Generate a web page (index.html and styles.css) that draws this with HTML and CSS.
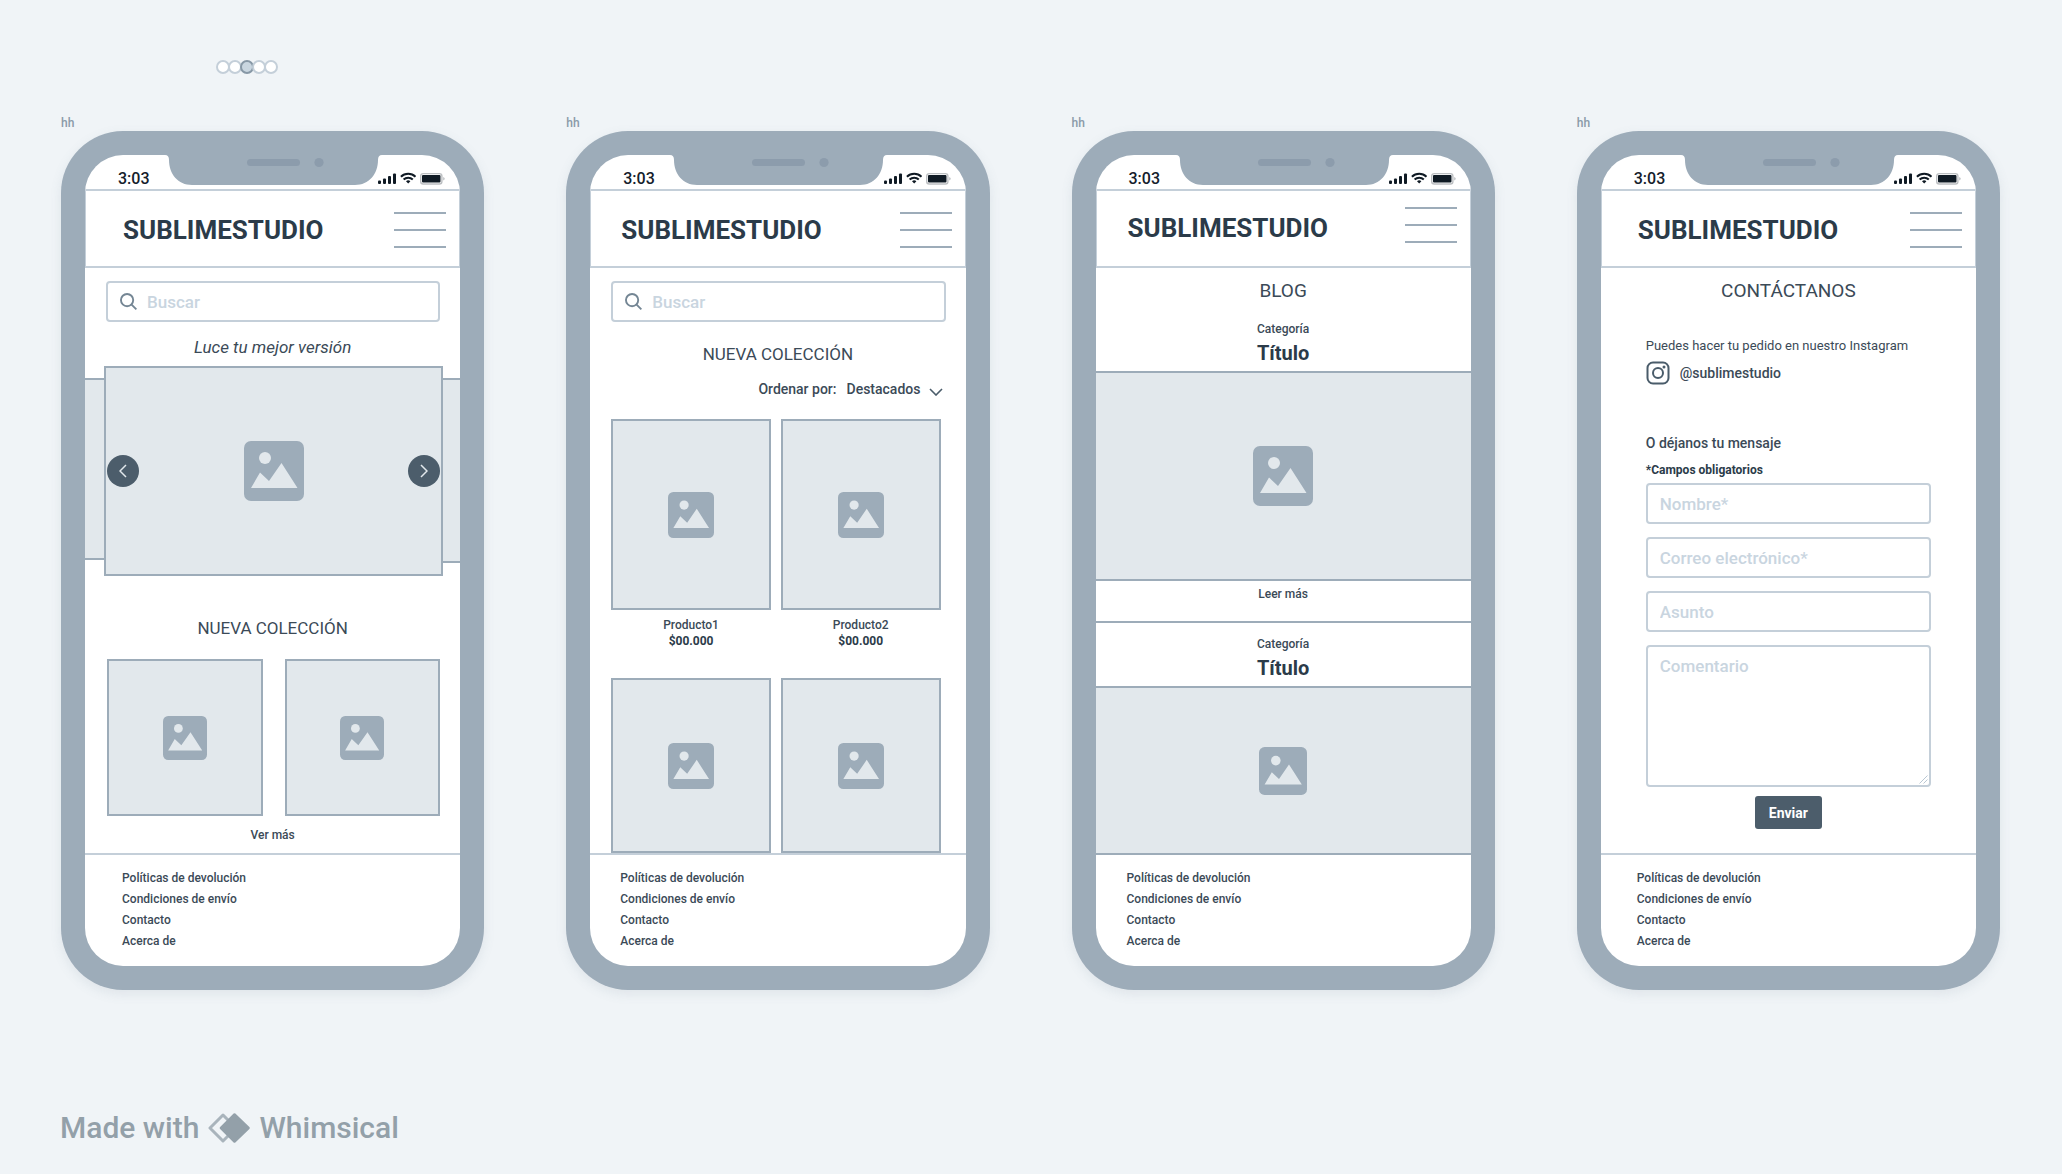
FILE: index.html
```html
<!DOCTYPE html>
<html lang="es">
<head>
<meta charset="utf-8">
<meta name="viewport" content="width=device-width, initial-scale=1">
<title>Sublimestudio – wireframes</title>
<link rel="stylesheet" href="styles.css">
</head>
<body>
<svg class="sprite" aria-hidden="true">
  <symbol id="i-image" viewBox="0 0 60 60">
    <rect width="60" height="60" rx="7" fill="#9dacb9"/>
    <circle cx="21" cy="17" r="6" fill="#e2e8ec"/>
    <path d="M7 47 16 31.500 25 40 37.500 22 53.500 47Z" fill="#e2e8ec"/>
  </symbol>
  <symbol id="i-notch" viewBox="0 0 217 30">
    <path d="M0 0H217Q213 0 213 5C213 19 204 30 190 30H27C13 30 4 19 4 5Q4 0 0 0Z" fill="#9dacb9"/>
    <rect x="82" y="4" width="53" height="7" rx="3.500" fill="#8c9cac"/>
    <circle cx="154" cy="7.500" r="4.600" fill="#8c9cac"/>
  </symbol>
  <symbol id="i-status" viewBox="0 0 68 14">
    <g fill="#0f1a24">
      <rect x="0" y="8.500" width="3" height="3.500" rx="1"/>
      <rect x="5" y="6.500" width="3" height="5.500" rx="1"/>
      <rect x="10" y="4" width="3" height="8" rx="1"/>
      <rect x="15" y="1.500" width="3" height="10.500" rx="1"/>
      <rect x="44" y="3" width="18.500" height="7.500" rx="1"/>
      <path d="M28 9.200a3.200 3.200 0 0 1 4.400 0L30.200 11.600Z"/>
    </g>
    <g fill="none" stroke="#0f1a24" stroke-width="2">
      <path d="M22.900 4.800a10.500 10.500 0 0 1 14.600 0"/>
      <path d="M25.600 7.500a6.600 6.600 0 0 1 9.200 0"/>
    </g>
    <rect x="42.700" y="1.600" width="21.200" height="10.400" rx="2.500" fill="none" stroke="#bcbfc2" stroke-width="1.400"/>
    <path d="M65.200 5v3.600q1.500-.600 1.500-1.800T65.200 5Z" fill="#bcbfc2"/>
  </symbol>
  <symbol id="i-search" viewBox="0 0 18 18">
    <g fill="none" stroke="#748694" stroke-width="2"><circle cx="7.500" cy="7.500" r="6.500"/><path d="M12 12 17.300 17.300"/></g>
  </symbol>
  <symbol id="i-prev" viewBox="0 0 8 14"><path d="M7 1 1 7l6 6" fill="none" stroke="#e2e8ec" stroke-width="1.500"/></symbol>
  <symbol id="i-next" viewBox="0 0 8 14"><path d="M1 1l6 6-6 6" fill="none" stroke="#e2e8ec" stroke-width="1.500"/></symbol>
</svg>

<div class="dots">
  <span class="dot"></span><span class="dot"></span><span class="dot dot-on"></span><span class="dot"></span><span class="dot"></span>
</div>

<main class="board">
  <section class="frame frame-home">
    <p class="frame-name">hh</p>
    <div class="phone"><div class="screen">
      <div class="status"><span class="time">3:03</span><svg class="notch"><use href="#i-notch"/></svg><svg class="signals"><use href="#i-status"/></svg></div>
      <header class="top"><h1 class="brand">SUBLIMESTUDIO</h1><button class="menu" aria-label="Menú"><span></span><span></span><span></span></button></header>
      <div class="content">
        <label class="search"><svg class="search-icon" viewBox="0 0 18 18"><use href="#i-search"/></svg><input type="search" placeholder="Buscar" aria-label="Buscar"></label>
        <p class="tagline">Luce tu mejor versión</p>
        <div class="carousel">
          <div class="peek peek-left"></div>
          <div class="slide">
            <button class="arrow" aria-label="Anterior"><svg><use href="#i-prev"/></svg></button>
            <svg class="pic pic-60"><use href="#i-image"/></svg>
            <button class="arrow" aria-label="Siguiente"><svg><use href="#i-next"/></svg></button>
          </div>
          <div class="peek peek-right"></div>
        </div>
        <h2 class="heading">NUEVA COLECCIÓN</h2>
        <div class="pair">
          <div class="box"><svg class="pic pic-44"><use href="#i-image"/></svg></div>
          <div class="box"><svg class="pic pic-44"><use href="#i-image"/></svg></div>
        </div>
        <a class="more" href="#">Ver más</a>
      </div>
      <footer class="foot"><a href="#">Políticas de devolución</a><a href="#">Condiciones de envío</a><a href="#">Contacto</a><a href="#">Acerca de</a></footer>
    </div></div>
  </section>

  <section class="frame frame-shop">
    <p class="frame-name">hh</p>
    <div class="phone"><div class="screen">
      <div class="status"><span class="time">3:03</span><svg class="notch"><use href="#i-notch"/></svg><svg class="signals"><use href="#i-status"/></svg></div>
      <header class="top"><h1 class="brand">SUBLIMESTUDIO</h1><button class="menu" aria-label="Menú"><span></span><span></span><span></span></button></header>
      <div class="content">
        <label class="search"><svg class="search-icon" viewBox="0 0 18 18"><use href="#i-search"/></svg><input type="search" placeholder="Buscar" aria-label="Buscar"></label>
        <h2 class="heading">NUEVA COLECCIÓN</h2>
        <div class="sort">
          <label for="sort">Ordenar por:</label>
          <span class="sort-field"><select id="sort"><option>Destacados</option></select>
          <svg class="sort-chevron" viewBox="0 0 14 8"><path d="M1 1l6 6 6-6" fill="none" stroke="#4a5c6a" stroke-width="1.600"/></svg></span>
        </div>
        <div class="products">
          <article class="product">
            <div class="box"><svg class="pic pic-46"><use href="#i-image"/></svg></div>
            <p class="name">Producto1</p><p class="price">$00.000</p>
          </article>
          <article class="product">
            <div class="box"><svg class="pic pic-46"><use href="#i-image"/></svg></div>
            <p class="name">Producto2</p><p class="price">$00.000</p>
          </article>
          <article class="product product-cut"><div class="box"><svg class="pic pic-46"><use href="#i-image"/></svg></div></article>
          <article class="product product-cut"><div class="box"><svg class="pic pic-46"><use href="#i-image"/></svg></div></article>
        </div>
      </div>
      <footer class="foot"><a href="#">Políticas de devolución</a><a href="#">Condiciones de envío</a><a href="#">Contacto</a><a href="#">Acerca de</a></footer>
    </div></div>
  </section>

  <section class="frame frame-blog">
    <p class="frame-name">hh</p>
    <div class="phone"><div class="screen">
      <div class="status"><span class="time">3:03</span><svg class="notch"><use href="#i-notch"/></svg><svg class="signals"><use href="#i-status"/></svg></div>
      <header class="top"><h1 class="brand">SUBLIMESTUDIO</h1><button class="menu" aria-label="Menú"><span></span><span></span><span></span></button></header>
      <div class="content">
        <h2 class="page-title">BLOG</h2>
        <article class="post">
          <p class="category">Categoría</p>
          <h3 class="post-title">Título</h3>
          <div class="cover"><svg class="pic pic-60"><use href="#i-image"/></svg></div>
          <a class="read" href="#">Leer más</a>
        </article>
        <article class="post post-next">
          <p class="category">Categoría</p>
          <h3 class="post-title">Título</h3>
          <div class="cover"><svg class="pic pic-48"><use href="#i-image"/></svg></div>
        </article>
      </div>
      <footer class="foot"><a href="#">Políticas de devolución</a><a href="#">Condiciones de envío</a><a href="#">Contacto</a><a href="#">Acerca de</a></footer>
    </div></div>
  </section>

  <section class="frame frame-contact">
    <p class="frame-name">hh</p>
    <div class="phone"><div class="screen">
      <div class="status"><span class="time">3:03</span><svg class="notch"><use href="#i-notch"/></svg><svg class="signals"><use href="#i-status"/></svg></div>
      <header class="top"><h1 class="brand">SUBLIMESTUDIO</h1><button class="menu" aria-label="Menú"><span></span><span></span><span></span></button></header>
      <div class="content">
        <h2 class="page-title">CONTÁCTANOS</h2>
        <form class="contact">
          <p class="intro">Puedes hacer tu pedido en nuestro Instagram</p>
          <a class="insta" href="#"><svg viewBox="0 0 24 24"><g fill="none" stroke="#4a5c6a" stroke-width="2"><rect x="1.500" y="1.500" width="21" height="21" rx="5.500"/><circle cx="12" cy="12" r="5"/></g><circle cx="18" cy="6" r="1.500" fill="#4a5c6a"/></svg><span>@sublimestudio</span></a>
          <p class="lead">O déjanos tu mensaje</p>
          <p class="required">*Campos obligatorios</p>
          <div class="fields">
            <input type="text" placeholder="Nombre*" aria-label="Nombre">
            <input type="email" placeholder="Correo electrónico*" aria-label="Correo electrónico">
            <input type="text" placeholder="Asunto" aria-label="Asunto">
            <div class="area"><textarea placeholder="Comentario" aria-label="Comentario"></textarea><svg class="grip" viewBox="0 0 9 9"><path d="M.500 8.500l8-8M4.500 8.500l4-4" stroke="#b9c7d3" fill="none"/></svg></div>
          </div>
          <button class="send" type="submit">Enviar</button>
        </form>
      </div>
      <footer class="foot"><a href="#">Políticas de devolución</a><a href="#">Condiciones de envío</a><a href="#">Contacto</a><a href="#">Acerca de</a></footer>
    </div></div>
  </section>
</main>

<div class="credit">
  <span>Made with</span>
  <svg viewBox="0 0 42 30"><path d="M15 2 2 15l13 13 13-13Z" fill="none" stroke="#a9b4bc" stroke-width="3" stroke-linejoin="round"/><path d="M26.500 1.500 40.500 15 26.500 28.500 13 15Z" fill="#93a0a9" stroke="#93a0a9" stroke-width="2.500" stroke-linejoin="round"/></svg>
  <span>Whimsical</span>
</div>
</body>
</html>
```
FILE: styles.css
```css
:root {
  --frame: #9dacb9;
  --line: #c4cfd9;
  --fill: #e2e8ec;
  --ink: #2b3b49;
  --text: #3b4a57;
  --solid: #4c5d6b;
  --hint: #c9d5df;
}

* { box-sizing: border-box; margin: 0; }

body {
  background: #f0f4f7;
  color: var(--text);
  font-family: Roboto, "Liberation Sans", sans-serif;
  font-size: 12px;
  font-weight: 500;
  line-height: 20px;
}

a { color: inherit; text-decoration: none; }
button, input, select, textarea { font-family: inherit; color: inherit; }
button { border: 0; padding: 0; background: none; }
.sprite { display: block; width: 0; height: 0; }
.pic { flex: none; }
.pic-44 { width: 44px; height: 44px; }
.pic-46 { width: 46px; height: 46px; }
.pic-48 { width: 48px; height: 48px; }
.pic-60 { width: 60px; height: 60px; }

.dots { display: flex; gap: 12px; padding: 60px 0 0 216px; }
.dot {
  flex: none;
  width: 14px;
  height: 14px;
  margin-right: -14px;
  border: 2px solid var(--line);
  border-radius: 50%;
  background: #fff;
}
.dot-on { background: #c9d6e0; border-color: #8798a6; }

.board {
  display: grid;
  grid-template-columns: repeat(4, minmax(0, 1fr));
  gap: 82px;
  padding: 42px 62px 0 61px;
}
.frame-name { color: #8a9aa8; line-height: 15px; }
.phone {
  border-radius: 62px;
  padding: 24px;
  background: var(--frame);
  box-shadow: 0 4px 12px rgba(100, 120, 140, .12);
}
.screen {
  display: flex;
  flex-direction: column;
  border-radius: 38px;
  overflow: hidden;
  background: #fff;
}

.status {
  display: grid;
  grid-template-columns: 80px 217px minmax(0, 1fr);
  height: 34px;
}
.time { padding: 14px 0 0 33px; color: #14202b; font-size: 16px; line-height: 20px; }
.notch { width: 217px; height: 30px; }
.signals { justify-self: end; width: 68px; height: 14px; margin: 17px 14px 0 0; }

.top {
  display: flex;
  align-items: center;
  justify-content: space-between;
  height: 79px;
  padding: 2px 13px 0 var(--inset);
  border: 2px solid var(--line);
  border-width: 2px 1px;
}
.brand { color: var(--ink); font-size: 26px; font-weight: 700; line-height: 32px; }
.menu { display: grid; gap: 15px; width: 52px; }
.menu span { height: 2px; background: var(--frame); }
.frame-home { --inset: 37px; }
.frame-shop { --inset: 30px; }
.frame-blog { --inset: 31px; }
.frame-contact { --inset: 36px; }
.frame-blog .top { padding-bottom: 4px; }
.frame-blog .menu { margin-bottom: 6px; }

.content { display: flex; flex-direction: column; min-height: 585px; }

.foot {
  display: grid;
  padding: 13px 0 14px var(--inset);
  border-top: 2px solid var(--line);
  line-height: 21px;
}

.search {
  display: flex;
  align-items: center;
  gap: 10px;
  height: 41px;
  margin: 13px 20px 0 21px;
  padding: 0 12px;
  border: 2px solid var(--line);
  border-radius: 4px;
}
.search-icon { width: 17px; height: 17px; }
.search input { flex: 1; min-width: 0; padding: 0; border: 0; outline: 0; font-size: 17px; font-weight: 500; }
::placeholder { color: var(--hint); opacity: 1; }

.tagline { margin-top: 13px; text-align: center; font-size: 17px; font-style: italic; font-weight: 400; line-height: 24px; }
.carousel { display: grid; grid-template-columns: 19px 1fr 17px; margin-top: 7px; }
.peek { margin-top: 12px; background: var(--fill); border: 2px solid var(--frame); border-width: 2px 0; }
.peek-left { height: 182px; }
.peek-right { height: 185px; }
.slide, .box, .cover {
  display: flex;
  align-items: center;
  justify-content: center;
  background: var(--fill);
  border: 2px solid var(--frame);
}
.slide { justify-content: space-between; height: 210px; padding: 0 1px; }
.arrow { display: grid; place-items: center; width: 32px; height: 32px; border-radius: 50%; background: var(--solid); }
.arrow svg { width: 8px; height: 14px; }
.heading { text-align: center; font-size: 17px; font-weight: 400; line-height: 24px; }
.frame-home .heading { margin-top: 40px; }
.frame-shop .heading { margin-top: 20px; }
.pair { display: grid; grid-template-columns: 1fr 1fr; gap: 22px; margin: 19px 20px 0 22px; }
.pair .box { height: 157px; }
.more { align-self: center; margin-top: 9px; }

.sort { display: flex; justify-content: flex-end; gap: 10px; margin: 13px 23px 0 0; font-size: 14px; }
.sort-field { display: flex; gap: 8px; }
.sort select { appearance: none; border: 0; padding: 0; background: none; font-size: 14px; font-weight: 500; line-height: 20px; }
.sort-chevron { width: 14px; height: 8px; margin-top: 9px; }
.products { display: grid; grid-template-columns: 1fr 1fr; gap: 29px 10px; margin: 20px 25px 0 21px; }
.product { text-align: center; line-height: 16px; }
.product .box { height: 191px; margin-bottom: 7px; }
.product-cut .box { height: 175px; margin: 0; }
.price { color: var(--ink); font-weight: 700; }

.page-title { margin-top: 11px; text-align: center; font-size: 19px; font-weight: 400; line-height: 24px; }
.post { display: flex; flex-direction: column; text-align: center; padding-top: 16px; }
.post-title { color: var(--ink); font-size: 20px; font-weight: 700; line-height: 24px; margin-top: 2px; }
.cover { height: 210px; margin-top: 6px; border-width: 2px 0; }
.read { align-self: center; margin-top: 3px; }
.post-next { margin-top: 17px; border-top: 2px solid var(--frame); padding-top: 11px; }
.post-next .cover { height: 167px; border-bottom: 0; }
.frame-blog .foot { border-color: var(--frame); }

.contact { display: flex; flex-direction: column; margin: 33px 45px 0; }
.intro { font-size: 13px; font-weight: 400; }
.insta { display: flex; align-items: center; gap: 10px; margin-top: 5px; font-size: 14px; line-height: 24px; }
.insta svg { width: 24px; height: 24px; }
.lead { margin-top: 48px; font-size: 14px; }
.required { margin-top: 7px; color: var(--ink); font-weight: 700; }
.fields { display: grid; gap: 13px; margin-top: 3px; }
.fields input, .fields textarea {
  display: block;
  width: 100%;
  border: 2px solid var(--line);
  border-radius: 4px;
  padding: 0 12px;
  background: #fff;
  outline: 0;
  font-size: 17px;
  font-weight: 500;
}
.fields input { height: 41px; }
.fields textarea { height: 142px; padding-top: 7px; line-height: 24px; resize: none; }
.area { position: relative; }
.grip { position: absolute; right: 3px; bottom: 3px; width: 9px; height: 9px; }
.send {
  align-self: center;
  height: 33px;
  margin-top: 9px;
  padding: 0 14px;
  border-radius: 3px;
  background: var(--solid);
  color: #fff;
  font-size: 14px;
  font-weight: 700;
}

.credit {
  display: flex;
  align-items: center;
  gap: 9px;
  padding: 119px 60px 20px;
  color: #93a0a9;
  font-size: 30px;
  line-height: 38px;
}
.credit svg { width: 42px; height: 30px; }
```
